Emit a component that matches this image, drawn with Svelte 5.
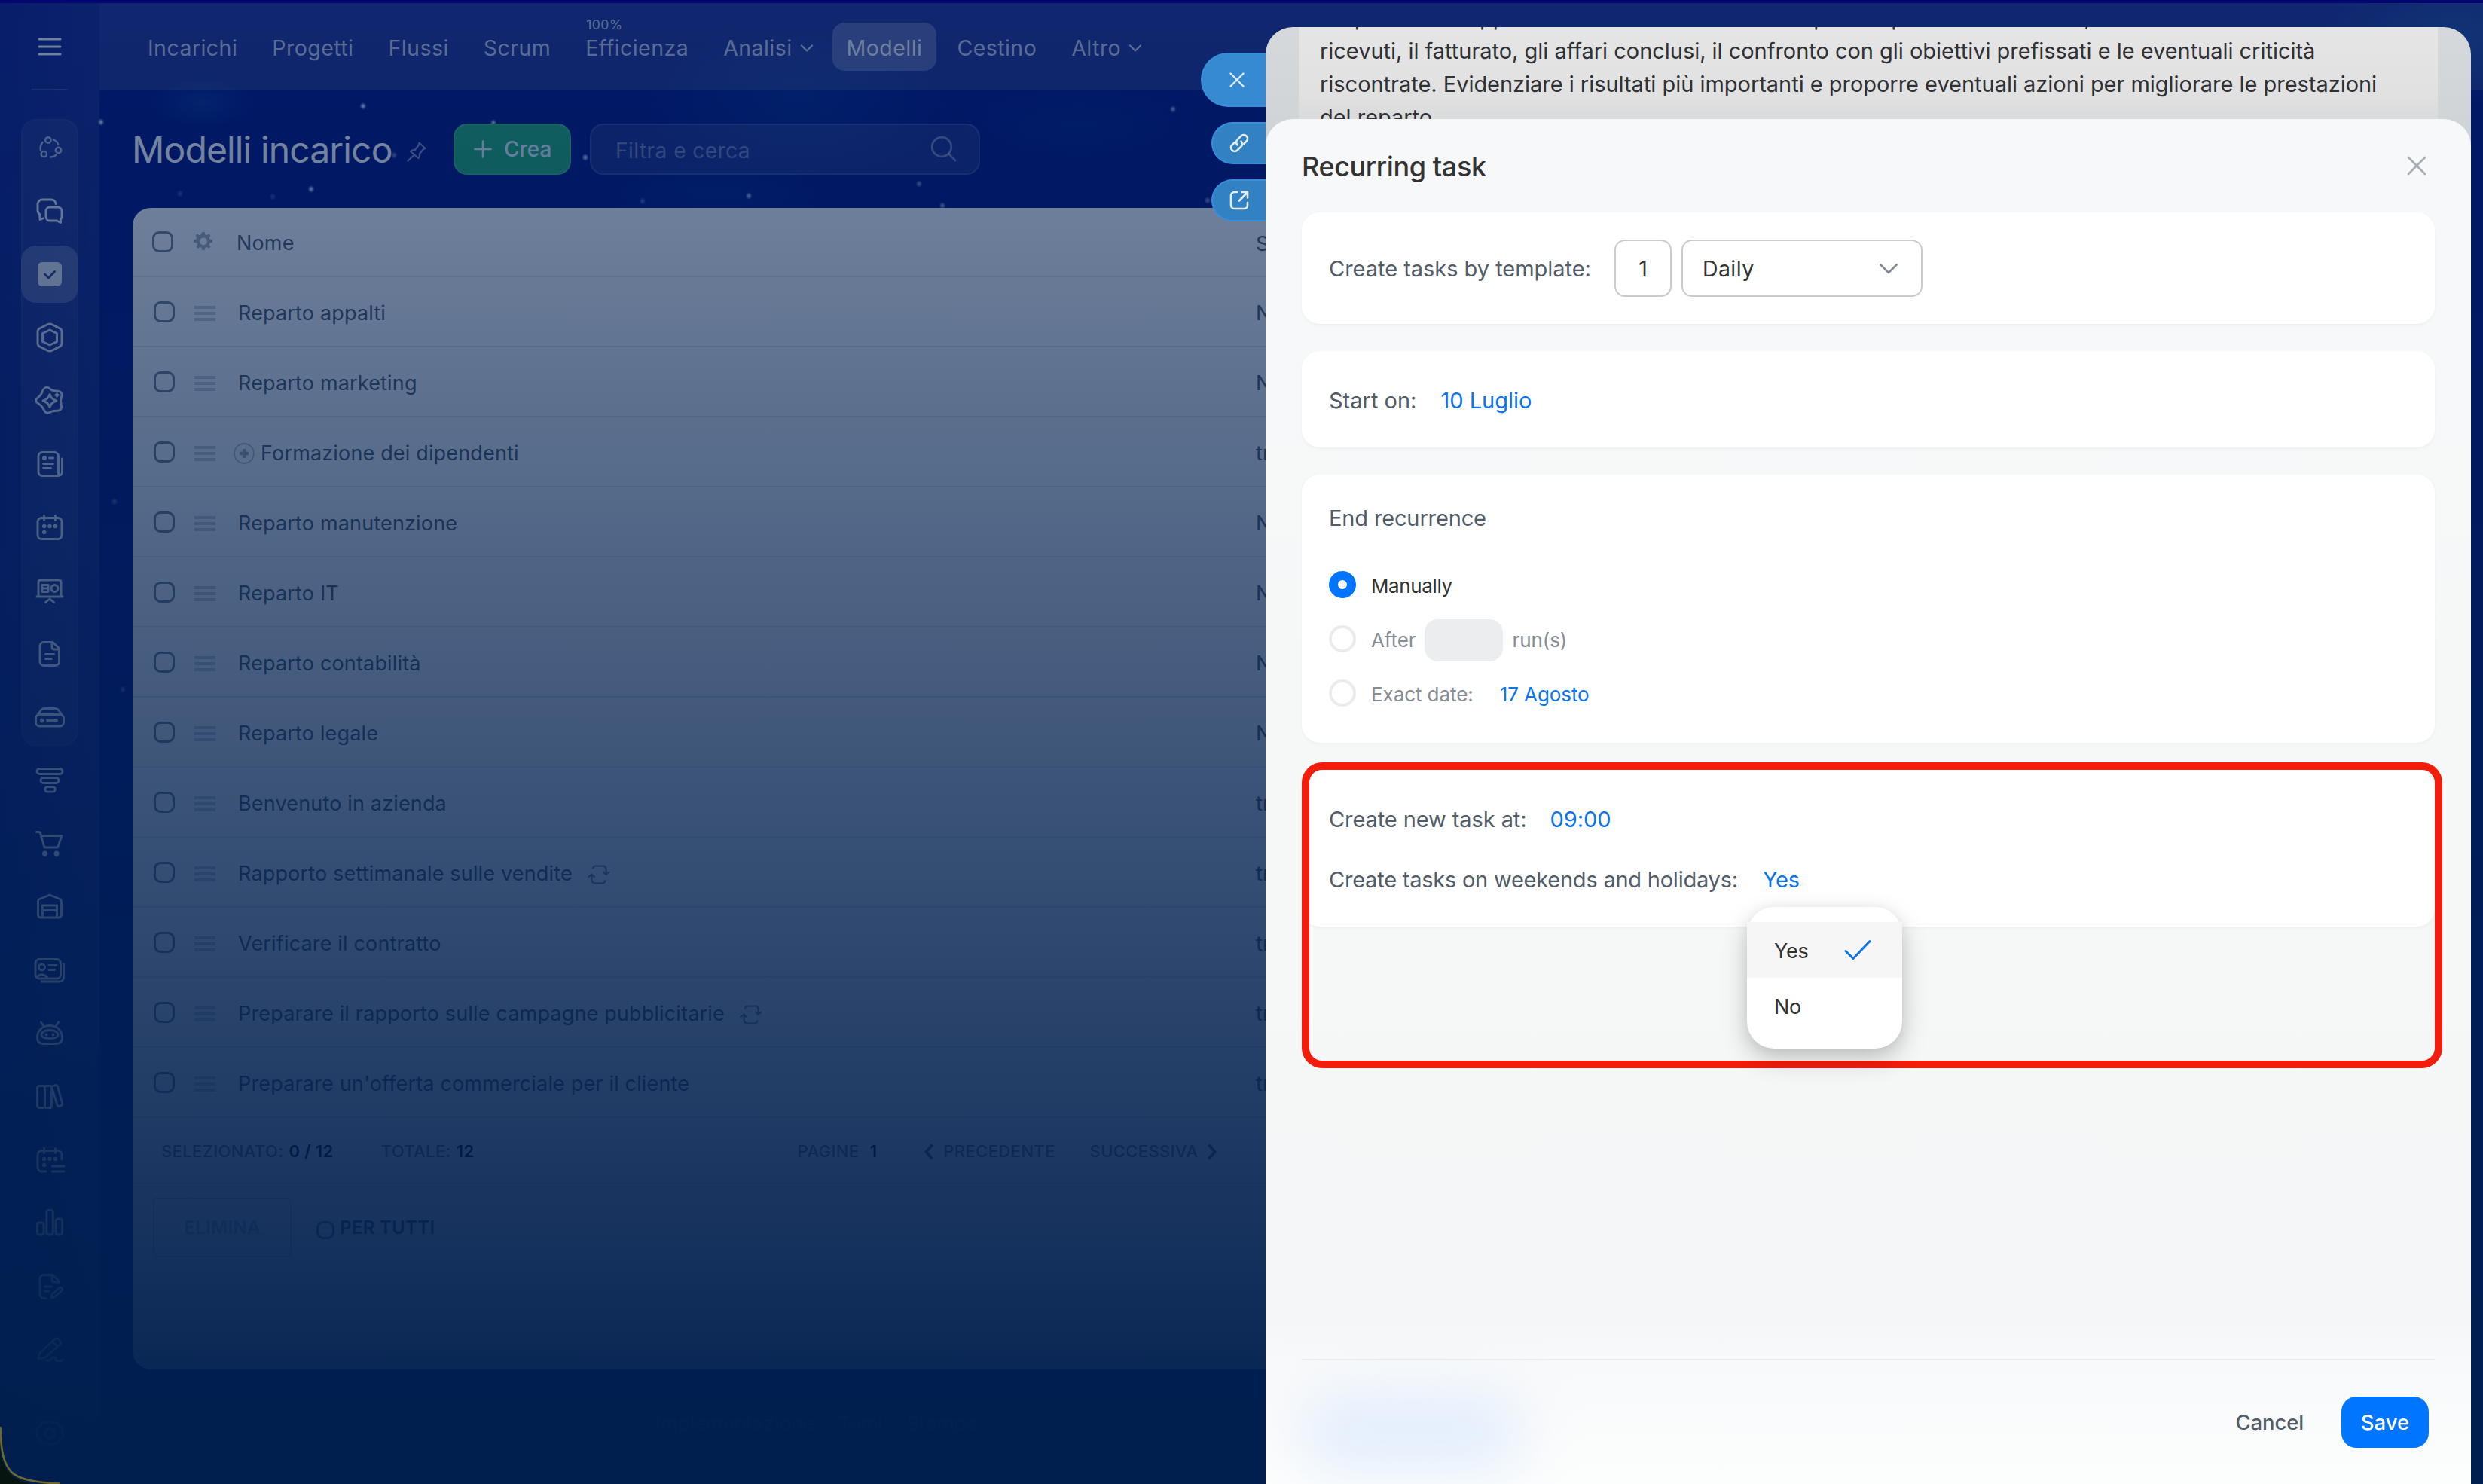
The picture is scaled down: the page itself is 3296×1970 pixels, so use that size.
<script>
  const nav = [
    { label: 'Incarichi' },
    { label: 'Progetti' },
    { label: 'Flussi' },
    { label: 'Scrum' },
    { label: 'Efficienza', badge: '100%' },
    { label: 'Analisi', chevron: true },
    { label: 'Modelli', active: true },
    { label: 'Cestino' },
    { label: 'Altro', chevron: true }
  ];

  // Sidebar glyphs, each drawn in a 44x44 box: d = stroked outline, f = filled details
  const pinned = [
    { dim: true, w: 2.4, d: 'M16.200 12a3.700 3.700 0 1 0 7.400 0a3.700 3.700 0 1 0-7.400 0M29.800 25.500a3.700 3.700 0 1 0 7.400 0a3.700 3.700 0 1 0-7.400 0M10.600 30.600a3.700 3.700 0 1 0 7.400 0a3.700 3.700 0 1 0-7.400 0M10 26q-1.500-6.500 2.500-11M27 11.500q5 2 6.200 6M23 34.500q4.500 0 7.500-3' },
    { d: 'M13 32l-4 1.500-.5-7.500Q6 25 6 21V13a6 6 0 0 1 6-6h12a6 6 0 0 1 6 5.500M22 17h11a5 5 0 0 1 5 5v8q0 2-1.500 3v4.500L31.500 35H22a5 5 0 0 1-5-5v-8a5 5 0 0 1 5-5z' },
    { active: true },
    { d: 'M19.500 4.500q2.500-1.200 5 0l11 5.500q2.500 1.500 2.500 4v16q0 2.500-2.500 4l-11 5.500q-2.500 1.200-5 0l-11-5.500Q6 32.500 6 30V14q0-2.500 2.500-4zM22 12l9.500 4.500v11L22 32l-9.500-4.500v-11z' },
    { d: 'M16.500 4.500q3-1.200 5.500 1.500q2 2 5 2.500l7 1q4.500 1 4 5.500l-1.500 7l1 8q.500 4-4 5l-6 .5q-3 .2-6 2.200q-3.500 1.500-6-1.500l-3.500-6q-1.500-2.500-4.500-4l-3-2.500q-2-2 0-4.200l3-2.800q3-2 4-5.200q1.500-5.500 5-7zM22 13.500q2 6.500 9 8.500q-7 2-9 8.500q-2-6.500-9-8.500q7-2 9-8.500z', f: 'M31.500 11l3.500 3.500-3.500 3.500-3.500-3.500z' },
    { d: 'M12 6.500h16.500a5 5 0 0 1 5 5V37.500H12a5 5 0 0 1-5-5v-21a5 5 0 0 1 5-5zM38.500 15v17.500a5 5 0 0 1-5 5M21.500 14h5M13.500 21.500h13M13.500 27.500h10', f: 'M12 14a3 3 0 1 0 6 0a3 3 0 1 0-6 0' },
    { d: 'M11 9.500h22a5 5 0 0 1 5 5v18a5 5 0 0 1-5 5H11a5 5 0 0 1-5-5v-18a5 5 0 0 1 5-5zM14.500 6.500v6M29.500 6.500v6', f: 'M12 20.500a2.700 2.700 0 1 0 5.400 0a2.700 2.700 0 1 0-5.400 0M19.300 20.500a2.700 2.700 0 1 0 5.400 0a2.700 2.700 0 1 0-5.400 0M26.600 20.500a2.700 2.700 0 1 0 5.400 0a2.700 2.700 0 1 0-5.400 0M12 28.500a2.700 2.700 0 1 0 5.400 0a2.700 2.700 0 1 0-5.400 0' },
    { d: 'M7 30V11q0-3 3-3h24q3 0 3 3v19M5 30h34M16.500 37.500l5.500-4.500 5.500 4.500M12 14.500h8v9h-8zM12 19h8M24 19a4.500 4.500 0 1 0 9 0a4.500 4.500 0 1 0-9 0' },
    { d: 'M14 6.500h12l8.500 8V32.500a5 5 0 0 1-5 5H14a5 5 0 0 1-5-5v-21a5 5 0 0 1 5-5zM25 7v6q0 3 3 3h6M16.500 22.500h11M16.500 28.500h8' },
    { d: 'M8.500 18.500h27a5 5 0 0 1 5 5v5.500a5 5 0 0 1-5 5h-27a5 5 0 0 1-5-5v-5.500a5 5 0 0 1 5-5zM5 20l5.500-7.500q1.500-2 4-2h15q2.500 0 4 2L39 20M18.500 26.500h13', f: 'M9 26.500a2.900 2.900 0 1 0 5.800 0a2.900 2.900 0 1 0-5.800 0' }
  ];
  const more = [
    { d: 'M8.500 6.500h27a3.500 3.500 0 0 1 0 7h-27a3.500 3.500 0 0 1 0-7zM13.500 18.500h17a3.500 3.500 0 0 1 0 7h-17a3.500 3.500 0 0 1 0-7zM19 30.500h7a3.300 3.300 0 0 1 0 6.600h-7a3.300 3.300 0 0 1 0-6.600z' },
    { d: 'M4.500 6.500h3q1.500 0 2 1.500l5.500 19h17.500L38 11.500H11', f: 'M12 35a3.500 3.500 0 1 0 7 0a3.500 3.500 0 1 0-7 0M27.500 35a3.500 3.500 0 1 0 7 0a3.500 3.500 0 1 0-7 0' },
    { d: 'M6.500 15q0-2.500 2-3.500L22 6l13.500 5.500q2 1 2 3.500v17q0 4-4 4h-23q-4 0-4-4zM12.500 36V20h19v16M12.500 26.500h19' },
    { d: 'M8 7.500h23.500a5 5 0 0 1 5 5V28a5 5 0 0 1-5 5H8a5 5 0 0 1-5-5V12.500a5 5 0 0 1 5-5zM40.500 14v17.500a5.500 5.500 0 0 1-5.500 5.500H11M7.500 18a4 4 0 1 0 8 0a4 4 0 1 0-8 0M5 31q6-6.500 13.500 0M21 15.500h10M21 21.500h7.500' },
    { d: 'M22 11.500c10 0 16.500 6.500 16.500 16q0 8-8 8h-17q-8 0-8-8c0-9.500 6.500-16 16.500-16zM10.500 7l4 6M33.500 7l-4 6M22 17.500c8 0 11 3.500 11 6s-3 5-11 5s-11-2.500-11-5s3-6 11-6z', f: 'M15.600 23.500a1.900 1.900 0 1 0 3.800 0a1.900 1.900 0 1 0-3.800 0M24.600 23.500a1.900 1.900 0 1 0 3.800 0a1.900 1.900 0 1 0-3.800 0' },
    { d: 'M8.500 7.500h5q2 0 2 2v25q0 2-2 2h-5q-3 0-3-3v-23q0-3 3-3zM17.500 7.500h5q2 0 2 2v25q0 2-2 2h-5q-2 0-2-2v-25q0-2 2-2zM25 10q-.6-2 1.400-2.600l3.200-.8q2-.5 2.800 1.500l6.200 22q.8 3-2 3.900l-2 .6q-2 .5-2.600-1.500z' },
    { d: 'M17 37h-6a5 5 0 0 1-5-5V14.500a5 5 0 0 1 5-5h22a5 5 0 0 1 5 5V21M14.500 6.500v6M29.500 6.500v6M25.500 30h15.500M25.500 37h15.500', f: 'M12 20.500a2.700 2.700 0 1 0 5.400 0a2.700 2.700 0 1 0-5.400 0M19.300 20.500a2.700 2.700 0 1 0 5.400 0a2.700 2.700 0 1 0-5.400 0M26.600 20.500a2.700 2.700 0 1 0 5.400 0a2.700 2.700 0 1 0-5.400 0M12 28.500a2.700 2.700 0 1 0 5.400 0a2.700 2.700 0 1 0-5.400 0' },
    { d: 'M8.500 21h2.500q3 0 3 3v10q0 3-3 3H8.500q-3 0-3-3V24q0-3 3-3zM20.800 4.500h2.500q3 0 3 3V34q0 3-3 3h-2.500q-3 0-3-3V7.500q0-3 3-3zM33 16h2.500q3 0 3 3v15q0 3-3 3H33q-3 0-3-3V19q0-3 3-3z' },
    { d: 'M17 37.500h-3a5 5 0 0 1-5-5v-21a5 5 0 0 1 5-5h12l8.500 8V17M25 7v6q0 3 3 3h6M15.500 22h9M15.500 28h5M24 37l1-5 9.500-8q2-1.500 3.500 0t0 3.500L28.500 35.500z' },
    { d: 'M7 34l2-8L29 7.500q2-1.500 4 0l3 3q1.500 2 0 4L15.500 32.500zM25.500 11l7 7M18 36q4 1.500 6.500-2t4.500-1.500t1 3.500q4 2 9-.5' }
  ];
  const gear = 'M22 5l5 2 5.500-.5 2.500 5 4.500 3.500-1 5.500 1 5.500-4.500 3.500-2.500 5-5.500-.5-5 2-5-2-5.500.5-2.500-5-4.500-3.500 1-5.500-1-5.500 4.500-3.500 2.500-5 5.500.5zM15.500 21a6.500 6.500 0 1 0 13 0a6.500 6.500 0 1 0-13 0';

  const rows = [
    { name: 'Reparto appalti', next: 'N' },
    { name: 'Reparto marketing', next: 'N' },
    { name: 'Formazione dei dipendenti', next: 'tra', expandable: true },
    { name: 'Reparto manutenzione', next: 'N' },
    { name: 'Reparto IT', next: 'N' },
    { name: 'Reparto contabilità', next: 'N' },
    { name: 'Reparto legale', next: 'N' },
    { name: 'Benvenuto in azienda', next: 'tra' },
    { name: 'Rapporto settimanale sulle vendite', next: 'tra', repeat: true },
    { name: 'Verificare il contratto', next: 'tra' },
    { name: 'Preparare il rapporto sulle campagne pubblicitarie', next: 'tra', repeat: true },
    { name: "Preparare un'offerta commerciale per il cliente", next: 'tra' }
  ];

  const stars = [
    [482, 141, 1], [655, 163, 0.9], [777, 209, 1], [413, 251, 1], [523, 206, 0.5],
    [994, 260, 0.8], [1220, 244, 0.6], [1251, 273, 0.7], [1557, 145, 0.7], [1603, 266, 0.6],
    [134, 162, 1], [239, 257, 0.3], [362, 261, 0.3], [152, 666, 0.4], [163, 915, 0.4], [853, 267, 0.4]
  ];
</script>

{#snippet glyph(item)}
  <svg class="glyph" class:dim={item.dim} viewBox="0 0 44 44" fill="none" stroke="currentColor" stroke-width={item.w ?? 2.9} stroke-linecap="round" stroke-linejoin="round">
    {#if item.active}
      <rect x="6" y="6" width="32" height="32" rx="6" fill="currentColor" stroke="none" />
      <path class="tick" d="M15.500 22l5 5 8-8.500" stroke-width="3" />
    {:else}
      <path d={item.d} />
      {#if item.f}<path d={item.f} fill="currentColor" stroke="none" />{/if}
    {/if}
  </svg>
{/snippet}

{#snippet chevronDown()}
  <svg class="nav-chevron" viewBox="0 0 18 12" fill="none" stroke="currentColor" stroke-width="2.400" stroke-linecap="round" stroke-linejoin="round"><path d="M2 2.500l7 7 7-7" /></svg>
{/snippet}

<div class="app">
  <svg class="sky" viewBox="0 0 3296 1970" preserveAspectRatio="none">
    <defs>
      <radialGradient id="neb"><stop offset="0" stop-color="#0a5fb4" stop-opacity=".5" /><stop offset="1" stop-color="#0a5fb4" stop-opacity="0" /></radialGradient>
      <radialGradient id="star"><stop offset="0" stop-color="#fff" stop-opacity=".95" /><stop offset=".5" stop-color="#bcd0ff" stop-opacity=".6" /><stop offset="1" stop-color="#bcd0ff" stop-opacity="0" /></radialGradient>
    </defs>
    <ellipse cx="268" cy="136" rx="70" ry="34" fill="url(#neb)" opacity=".6" />
    <ellipse cx="1060" cy="130" rx="210" ry="110" fill="url(#neb)" opacity=".4" />
    <ellipse cx="950" cy="256" rx="150" ry="40" fill="url(#neb)" opacity=".3" />
    <ellipse cx="1430" cy="165" rx="160" ry="50" fill="url(#neb)" opacity=".25" />
    <ellipse cx="3260" cy="50" rx="190" ry="90" fill="url(#neb)" opacity=".8" />
    {#each stars as [x, y, o]}<ellipse cx={x} cy={y} rx="4.500" ry="5" fill="url(#star)" opacity={o} />{/each}
  </svg>

  <aside class="sidebar">
    <svg class="burger" viewBox="0 0 32 24" stroke="currentColor" stroke-width="3" stroke-linecap="round"><path d="M2 2h28M2 12h28M2 22h28" /></svg>
    <div class="rule"></div>
    <div class="group">
      {#each pinned as item}
        <div class="tile" class:on={item.active}>{@render glyph(item)}</div>
      {/each}
    </div>
    <div class="loose">
      {#each more as item}
        <div class="tile">{@render glyph(item)}</div>
      {/each}
    </div>
    <div class="tile settings">{@render glyph({ d: gear })}</div>
  </aside>

  <main>
    <nav>
      {#each nav as item}
        <div class="nav-item" class:on={item.active}>
          {#if item.badge}<span class="badge">{item.badge}</span>{/if}
          <span class="label">{item.label}</span>
          {#if item.chevron}{@render chevronDown()}{/if}
        </div>
      {/each}
    </nav>

    <header class="title-bar">
      <h1>Modelli incarico</h1>
      <svg class="pin" viewBox="0 0 26 28" fill="none" stroke="currentColor" stroke-width="2.200" stroke-linecap="round" stroke-linejoin="round"><path d="M16.500 1.500l8 7.500-2.500 1-5 6q.5 4-1.500 6L5 13q2-2.500 6-2l4.500-6zM9.500 18L1.500 25.500" /></svg>
      <button class="create">
        <svg viewBox="0 0 24 24" stroke="currentColor" stroke-width="2.600" stroke-linecap="round"><path d="M12 1.500v21M1.500 12h21" /></svg>
        Crea
      </button>
      <div class="search">
        <span>Filtra e cerca</span>
        <svg viewBox="0 0 36 36" fill="none" stroke="currentColor" stroke-width="2.800" stroke-linecap="round"><circle cx="15" cy="15" r="12.800" /><path d="M24.500 24.500l8.500 8.500" /></svg>
      </div>
    </header>

    <section class="grid">
      <div class="row head">
        <span class="check"></span>
        <svg class="gear" viewBox="0 0 26 26"><path fill="currentColor" fill-rule="evenodd" d="M11.400 0h3.200l.6 3.200 2.300 1L20.200 2.300l2.300 2.300-1.800 2.800 1 2.200 3.300.7v3.400l-3.300.7-1 2.300 1.800 2.700-2.300 2.300-2.700-1.800-2.300 1-.6 3.100h-3.200l-.7-3.100-2.200-1-2.700 1.800-2.300-2.300 1.800-2.700-1-2.300L0 13.700v-3.400l3.300-.7 1-2.200-1.800-2.800 2.300-2.300 2.700 1.900 2.200-1zM13 7.600a4.900 4.900 0 1 0 0 9.800a4.900 4.900 0 1 0 0-9.800z" /></svg>
        <span class="name">Nome</span>
        <span class="next">Suc</span>
      </div>
      {#each rows as row}
        <div class="row">
          <span class="check"></span>
          <span class="drag"><i></i><i></i><i></i></span>
          {#if row.expandable}
            <svg class="expand" viewBox="0 0 28 28" fill="none" stroke="currentColor"><circle cx="14" cy="14" r="13" stroke-width="1.800" opacity=".7" /><path d="M14 8v12M8 14h12" stroke-width="4.400" /></svg>
          {/if}
          <span class="name">{row.name}</span>
          {#if row.repeat}
            <svg class="repeat" viewBox="0 0 30 26" fill="none" stroke="currentColor" stroke-width="2.200" stroke-linecap="round" stroke-linejoin="round"><path d="M7 4.500q1-3 4-3h9q4.500 0 4.500 4.500v6M21 9.500l3.500 3.500 4-3.500M23.500 21q-1 3.500-4 3.500h-9q-5 0-5-5v-6M1.500 16l4-3.500 3.500 3.500" /></svg>
          {/if}
          <span class="next">{row.next}</span>
        </div>
      {/each}
      <div class="summary">
        <span>SELEZIONATO: <b>0 / 12</b></span>
        <span class="total">TOTALE: <b>12</b></span>
        <span class="pages">PAGINE <b>1</b></span>
        <svg class="prev" viewBox="0 0 14 22" fill="none" stroke="currentColor" stroke-width="4"><path d="M11.500 1.500L3.500 11l8 9.500" /></svg>
        <span>PRECEDENTE</span>
        <span class="forward">SUCCESSIVA</span>
        <svg class="fwd" viewBox="0 0 14 22" fill="none" stroke="currentColor" stroke-width="4"><path d="M2.500 1.500l8 9.500-8 9.500" /></svg>
      </div>
      <div class="actions">
        <span class="delete">ELIMINA</span>
        <span class="check small"></span>
        <span class="all">PER TUTTI</span>
      </div>
    </section>
    <footer><span>Implementazione</span><span>Temi</span><span>Stampa</span></footer>
  </main>

  <div class="shade"></div>
  <div class="stripe"></div>
  <svg class="corner" viewBox="0 0 110 84"><path d="M0 36C2 62 12 78 42 84H0z" fill="#06160f" /><path d="M.5 8C1 44 6 58 15 68 24 77 42 82 80 83.500" fill="none" stroke="#6f6a2c" stroke-width="2.600" /></svg>

  <div class="tabs">
    <div class="tab big"><svg viewBox="0 0 20 20" stroke="currentColor" stroke-width="2.300" stroke-linecap="round"><path d="M1.500 1.500l17 17M18.500 1.500l-17 17" /></svg></div>
    <div class="tab"><svg viewBox="0 0 26 26" fill="none" stroke="currentColor" stroke-width="2.600" stroke-linecap="round"><path d="M10.500 15.500q-3-4 .3-7.300l4.700-4.700a4.900 4.900 0 0 1 7 7l-3.300 3.300M15.500 10.500q3 4-.3 7.300l-4.700 4.700a4.900 4.900 0 0 1-7-7l3.300-3.300" /></svg></div>
    <div class="tab"><svg viewBox="0 0 26 26" fill="none" stroke="currentColor" stroke-width="2.600" stroke-linecap="round" stroke-linejoin="round"><path d="M10 2H6.500A4.500 4.500 0 0 0 2 6.500v13A4.500 4.500 0 0 0 6.500 24h13a4.500 4.500 0 0 0 4.500-4.500V16M16.500 2H24v7.500M23.500 2.500L13 13.500" /></svg></div>
  </div>

  <div class="slider">
    <div class="task">
      <p>Preparare un rapporto settimanale sulle vendite per il reparto commerciale, includendo: numero di lead<br />ricevuti, il fatturato, gli affari conclusi, il confronto con gli obiettivi prefissati e le eventuali criticità<br />riscontrate. Evidenziare i risultati più importanti e proporre eventuali azioni per migliorare le prestazioni<br />del reparto.</p>
    </div>
    <div class="sheet">
      <div class="sheet-head">
        <h2>Recurring task</h2>
        <svg viewBox="0 0 26 26" stroke="currentColor" stroke-width="2.600" stroke-linecap="round"><path d="M2 2l22 22M24 2L2 24" /></svg>
      </div>

      <div class="card template">
        <span>Create tasks by template:</span>
        <span class="field number">1</span>
        <span class="field select">Daily
          <svg viewBox="0 0 24 14" fill="none" stroke="currentColor" stroke-width="2.600" stroke-linecap="round" stroke-linejoin="round"><path d="M1.500 1.500l10.500 10.500 10.500-10.500" /></svg>
        </span>
      </div>

      <div class="card start">
        <span>Start on:</span><a>10 Luglio</a>
      </div>

      <div class="card end">
        <div class="line">End recurrence</div>
        <div class="options">
          <div class="option on"><span class="radio"></span>Manually</div>
          <div class="option"><span class="radio"></span>After<span class="count"></span>run(s)</div>
          <div class="option"><span class="radio"></span>Exact date:<a>17 Agosto</a></div>
        </div>
      </div>

      <div class="highlighted">
        <div class="card schedule">
          <div class="line"><span>Create new task at:</span><a>09:00</a></div>
          <div class="line tight"><span>Create tasks on weekends and holidays:</span><a>Yes</a></div>
        </div>
        <div class="frame"></div>
        <div class="menu">
          <div class="choice on">Yes
            <svg viewBox="0 0 36 28" fill="none" stroke="currentColor" stroke-width="3" stroke-linecap="round" stroke-linejoin="round"><path d="M2 15.500l10 10L34 2.500" /></svg>
          </div>
          <div class="choice">No</div>
        </div>
      </div>

      <div class="sheet-foot">
        <div class="glow"></div>
        <span class="cancel">Cancel</span>
        <button class="save">Save</button>
      </div>
    </div>
  </div>
</div>

<style>
  :global(body) { margin: 0; background: #00204d; }
  .app {
    position: relative; width: 3296px; height: 1970px; overflow: hidden;
    display: grid; grid-template-columns: 132px 1fr;
    background: linear-gradient(#021080, #021480);
    font-family: Inter, "Liberation Sans", sans-serif;
    font-size: 28px; line-height: 40px;
  }
  button { border: 0; font: inherit; color: inherit; }
  .sky { position: absolute; inset: 0; width: 100%; height: 100%; }

  .sidebar {
    position: relative; display: flex; flex-direction: column; align-items: center;
    background: linear-gradient(90deg, rgba(255, 255, 255, .05), rgba(255, 255, 255, .085));
    color: rgba(255, 255, 255, .9); padding-top: 50px; box-sizing: border-box; height: 1970px;
  }
  .burger { width: 32px; height: 24px; }
  .rule { width: 48px; height: 2px; margin-top: 44px; background: rgba(255, 255, 255, .16); }
  .group {
    width: 76px; margin-top: 38px; display: flex; flex-direction: column; gap: 8px;
    border-radius: 20px; background: rgba(255, 255, 255, .07);
    box-shadow: inset 0 0 0 1.500px rgba(255, 255, 255, .05);
  }
  .loose { margin-top: 8px; display: flex; flex-direction: column; gap: 8px; }
  .tile { width: 76px; height: 76px; display: flex; align-items: center; justify-content: center; border-radius: 20px; }
  .tile.on { background: rgba(255, 255, 255, .24); }
  .settings { margin-top: 36px; }
  .glyph { width: 44px; height: 44px; }
  .glyph.dim { opacity: .7; }
  .tick { stroke: #33448f; }

  main { position: relative; min-width: 0; }
  nav {
    margin-top: 4px; height: 116px; padding: 26px 0 0 45px; box-sizing: border-box;
    display: flex; gap: 8px; background: rgba(255, 255, 255, .12);
    color: rgba(255, 255, 255, .7); font-size: 28.500px; letter-spacing: .016em;
  }
  .nav-item { position: relative; height: 64px; padding: 0 19px; display: flex; align-items: center; border-radius: 16px; }
  .nav-item.on { background: rgba(255, 255, 255, .24); color: rgba(255, 255, 255, .85); }
  .label { margin-top: 3px; }
  .badge { position: absolute; top: -17px; left: 20px; font-size: 17.500px; letter-spacing: .03em; }
  .nav-chevron { width: 18px; height: 12px; margin-left: 10px; margin-right: -2px; margin-top: 4px; }

  .title-bar { height: 156px; padding: 44px 0 0 43px; box-sizing: border-box; display: flex; align-items: flex-start; }
  h1 { margin: 0; flex: none; width: 366px; font-size: 48px; font-weight: 400; letter-spacing: -.018em; line-height: 69px; white-space: nowrap; color: #fff; }
  .pin { width: 26px; height: 28px; margin: 24px 0 0 -1px; color: rgba(255, 255, 255, .5); flex: none; }
  .create {
    width: 156px; height: 68px; margin-left: 36px; padding: 0 0 0 27px; border-radius: 18px; flex: none;
    display: flex; align-items: center; gap: 16px; font-weight: 500; color: #e2f3ff;
    background: #21a870; box-shadow: inset 0 0 0 2px rgba(255, 255, 255, .14);
  }
  .create svg { width: 24px; height: 24px; }
  .search {
    width: 518px; height: 68px; margin-left: 25px; padding: 0 28px 0 32px; box-sizing: border-box; border-radius: 18px;
    display: flex; align-items: center; justify-content: space-between; letter-spacing: .017em;
    color: rgba(255, 255, 255, .4); background: rgba(255, 255, 255, .1); border: 2px solid rgba(255, 255, 255, .12);
  }
  .search span { margin-top: 3px; }
  .search svg { width: 36px; height: 36px; }

  .grid {
    width: 3076px; height: 1542px; margin-left: 44px; border-radius: 24px; background: #fff;
    color: #525c69; font-size: 27px; letter-spacing: .006em;
  }
  .row { position: relative; height: 93px; box-sizing: border-box; padding-left: 28px; display: flex; align-items: center; border-bottom: 2px solid #e7eaed; }
  .row.head { height: 92px; padding-left: 26px; }
  .row.head .name { margin-left: 31px; margin-top: 3px; }
  .check { width: 28px; height: 28px; box-sizing: border-box; border: 3px solid #79828e; border-radius: 9px; flex: none; }
  .gear { width: 26px; height: 26px; margin-left: 27px; color: #a8adb6; }
  .drag { width: 28px; margin-left: 26px; margin-top: 4px; display: flex; flex-direction: column; gap: 4px; }
  .drag i { height: 4px; background: #cdd2d8; }
  .expand { width: 28px; height: 28px; margin: 4px -22px 0 24px; color: #a8adb4; }
  .name { margin-left: 30px; margin-top: 5px; white-space: nowrap; }
  .repeat { width: 30px; height: 26px; margin: 7px 0 0 20px; color: #828b95; }
  .next { position: absolute; left: 1491px; top: 28px; }

  .summary { height: 88px; box-sizing: border-box; border-bottom: 2px solid #e9ebee; padding: 2px 0 0 38px; display: flex; align-items: center; font-size: 22px; font-weight: 500; letter-spacing: .017em; color: #757c85; white-space: pre; }
  .summary b { font-weight: 600; color: #000; margin-left: 1px; }
  .total { margin-left: 63px; }
  .pages { margin-left: 429px; }
  .pages b { margin-left: 8px; }
  .prev, .fwd { width: 14px; height: 22px; color: #5c646e; margin-top: 2px; }
  .prev { margin: 2px 12px 0 62px; }
  .forward { margin-left: 46px; }
  .fwd { margin-left: 12px; }
  .actions { display: flex; align-items: center; padding: 18px 0 0 27px; font-size: 24px; font-weight: 600; letter-spacing: .013em; }
  .delete { width: 184px; height: 79px; box-sizing: border-box; display: flex; align-items: center; justify-content: center; border: 2px solid #d5d9de; border-radius: 6px; color: #b9bec6; }
  .check.small { width: 24px; height: 24px; margin: 6px 7px 0 33px; }
  .all { color: #535c69; }
  footer { display: flex; gap: 32px; padding: 52px 0 0 738px; font-size: 26px; color: rgba(255, 255, 255, .35); }

  .shade { position: absolute; inset: 0; background: linear-gradient(rgba(0, 31, 78, .5), rgba(0, 31, 78, 1)); }
  .stripe { position: absolute; inset: 0 0 auto; height: 4px; background: #00076e; }
  .corner { position: absolute; left: 0; bottom: 0; width: 110px; height: 84px; }

  .tabs { position: absolute; top: 70px; right: 1616px; display: flex; flex-direction: column; align-items: flex-end; gap: 20px; }
  .tab { width: 72px; height: 56px; box-sizing: border-box; border: 2px solid #378fdc; border-right: 0; border-radius: 28px 0 0 28px; background: #3281c2; color: #e3eef8; display: flex; align-items: center; padding-left: 22px; }
  .tab svg { width: 26px; height: 26px; }
  .tab.big { width: 86px; height: 72px; border-radius: 36px 0 0 36px; background: #368ad1; padding-left: 36px; }
  .tab.big svg { width: 20px; height: 20px; }

  .slider { position: absolute; left: 1680px; top: 36px; width: 1600px; height: 1934px; overflow: hidden; border-radius: 36px 36px 0 0; background: linear-gradient(#d5d9dc, #ced3d6 160px); }
  .task { height: 122px; margin: 0 44px; padding: 0 27px; background: linear-gradient(#e5e5e5, #e1e1e1 90px, #d9dadb); overflow: hidden; color: #2f3135; font-size: 29px; line-height: 44px; letter-spacing: -.001em; }
  .task p { margin: -34px 0 0 1px; white-space: nowrap; }
  .sheet {
    position: relative; height: 1812px; padding: 0 48px; box-sizing: border-box; display: flex; flex-direction: column;
    border-radius: 36px 36px 0 0; background: linear-gradient(#f7f8f9, #f6f7f7 60%, #f4f6f7 88%, #f8f9fa 91%, #fcfdfd);
    color: #525c69; font-size: 29px;
  }
  .sheet-head { height: 124px; display: flex; align-items: center; justify-content: space-between; padding-right: 11px; }
  h2 { margin: 1px 0 0; font-size: 36px; font-weight: 500; letter-spacing: -.011em; color: #333; }
  .sheet-head svg { width: 26px; height: 26px; color: #a8adb4; }
  .card { background: #fff; border-radius: 24px; box-shadow: 0 2px 4px rgba(0, 0, 0, .04); box-sizing: border-box; padding: 0 36px; margin-bottom: 36px; }
  a { color: #0b73ec; }
  .template, .start { display: flex; align-items: center; }
  .template { height: 148px; }
  .template > span:first-child { margin-top: 2px; letter-spacing: -.001em; }
  .field { height: 76px; box-sizing: border-box; border: 2px solid #c9ccd0; border-radius: 14px; display: flex; align-items: center; color: #333; font-size: 28.500px; padding-top: 2px; }
  .number { width: 76px; justify-content: center; margin: 0 13px 0 31px; }
  .select { width: 320px; justify-content: space-between; padding: 2px 31px 0 26px; letter-spacing: .015em; }
  .select svg { width: 24px; height: 14px; color: #828b95; }
  .start { height: 128px; gap: 32px; padding-top: 3px; }
  .end { height: 356px; padding-top: 38px; }
  .end .line { letter-spacing: -.005em; }
  .options { margin-top: 33px; font-size: 26px; letter-spacing: -.003em; }
  .option { height: 72px; display: flex; align-items: center; color: #868d95; padding-top: 1px; box-sizing: border-box; }
  .option.on { color: #333; letter-spacing: -.015em; }
  .option a { margin-left: 35px; }
  .radio { width: 36px; height: 36px; box-sizing: border-box; border: 4px solid #ebecee; border-radius: 50%; margin: -3px 20px 0 0; }
  .on .radio { border: 12px solid #0075ff; }
  .count { width: 104px; height: 56px; margin: 0 12px 0 12px; border-radius: 18px; background: #ecedef; }
  .highlighted { position: relative; }
  .schedule { height: 208px; padding-top: 46px; margin: 0; }
  .schedule .line { display: flex; gap: 31px; margin-bottom: 40px; letter-spacing: -.003em; }
  .schedule .tight { gap: 33px; letter-spacing: -.008em; }
  .frame { position: absolute; left: 0; top: -10px; width: 1514px; height: 406px; box-sizing: border-box; border: 10px solid #f31d0b; border-radius: 27px; }
  .menu { position: absolute; left: 591px; top: 182px; width: 206px; height: 188px; box-sizing: border-box; padding: 20px 0; border-radius: 36px; background: #fff; color: #333; font-size: 27px; letter-spacing: -.01em; box-shadow: 0 14px 36px rgba(0, 0, 0, .2), 0 4px 18px rgba(0, 0, 0, .08); }
  .choice { height: 74px; box-sizing: border-box; padding: 3px 41px 0 36px; display: flex; align-items: center; justify-content: space-between; }
  .choice.on { background: #f6f6f7; }
  .choice svg { width: 36px; height: 28px; color: #0b73ec; margin-top: -3px; }
  .sheet-foot { position: relative; height: 166px; box-sizing: border-box; margin-top: auto; border-top: 2px solid #ebeded; padding: 0 8px 1px 0; display: flex; align-items: center; justify-content: flex-end; font-size: 27.500px; font-weight: 500; }
  .glow { position: absolute; left: 0; top: 46px; width: 290px; height: 96px; border-radius: 48px; background: #e2edfc; filter: blur(36px); }
  .cancel { margin-right: 50px; color: #525c69; letter-spacing: -.005em; }
  .save { width: 116px; height: 68px; padding: 0; border-radius: 20px; background: #0075ff; color: #fff; }
</style>
